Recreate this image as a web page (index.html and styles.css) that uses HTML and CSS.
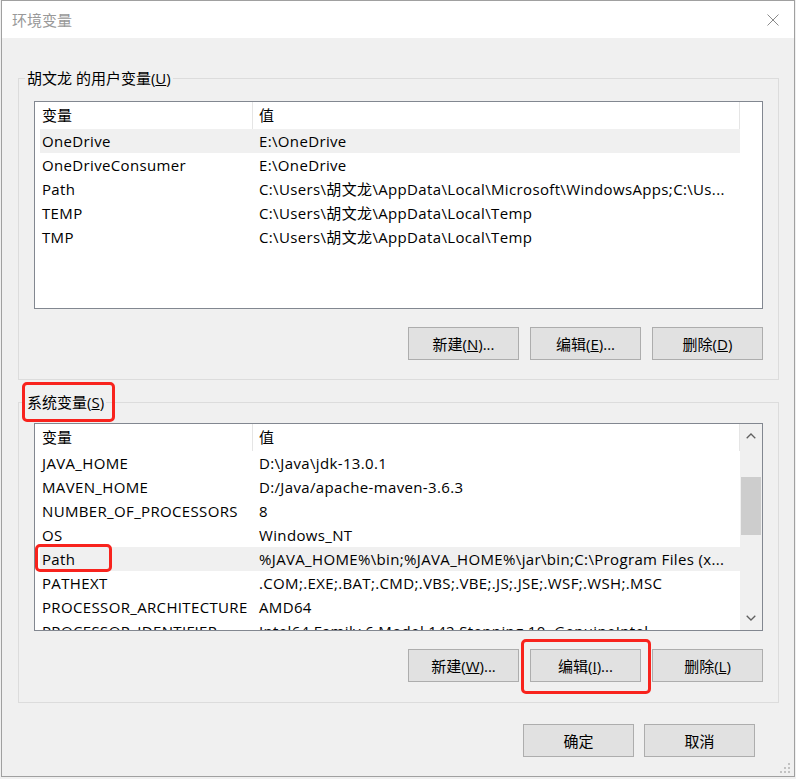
FILE: index.html
```html
<!DOCTYPE html>
<html lang="zh-CN">
<head>
<meta charset="utf-8">
<title>环境变量</title>
<link rel="stylesheet" href="styles.css">
</head>
<body>
<div class="window">
  <div class="titlebar">
    <span class="title">环境变量</span>
    <svg class="close" width="12" height="12" viewBox="0 0 12 12"><path d="M0.5 0.5 L11.5 11.5 M11.5 0.5 L0.5 11.5" stroke="#8a8a8a" stroke-width="1" fill="none"/></svg>
  </div>
  <div class="content">
    <fieldset class="group group-user">
      <legend>胡文龙 的用户变量(<u>U</u>)</legend>
      <div class="group-inner inner-user">
        <div class="list">
          <div class="list-content">
            <div class="row head"><div class="c1">变量</div><div class="c2">值</div></div>
            <div class="row sel"><div class="c1">OneDrive</div><div class="c2">E:\OneDrive</div></div>
            <div class="row"><div class="c1">OneDriveConsumer</div><div class="c2">E:\OneDrive</div></div>
            <div class="row"><div class="c1">Path</div><div class="c2">C:\Users\胡文龙\AppData\Local\Microsoft\WindowsApps;C:\Us...</div></div>
            <div class="row"><div class="c1">TEMP</div><div class="c2">C:\Users\胡文龙\AppData\Local\Temp</div></div>
            <div class="row"><div class="c1">TMP</div><div class="c2">C:\Users\胡文龙\AppData\Local\Temp</div></div>
          </div>
        </div>
        <div class="btns">
          <button class="btn">新建(<u>N</u>)...</button>
          <button class="btn">编辑(<u>E</u>)...</button>
          <button class="btn">删除(<u>D</u>)</button>
        </div>
      </div>
    </fieldset>

    <fieldset class="group group-sys">
      <legend>系统变量(<u>S</u>)</legend>
      <div class="group-inner inner-sys">
        <div class="list">
          <div class="list-content">
            <div class="row head"><div class="c1">变量</div><div class="c2">值</div></div>
            <div class="row"><div class="c1">JAVA_HOME</div><div class="c2">D:\Java\jdk-13.0.1</div></div>
            <div class="row"><div class="c1">MAVEN_HOME</div><div class="c2">D:/Java/apache-maven-3.6.3</div></div>
            <div class="row"><div class="c1">NUMBER_OF_PROCESSORS</div><div class="c2">8</div></div>
            <div class="row"><div class="c1">OS</div><div class="c2">Windows_NT</div></div>
            <div class="row sel"><div class="c1">Path</div><div class="c2">%JAVA_HOME%\bin;%JAVA_HOME%\jar\bin;C:\Program Files (x...</div></div>
            <div class="row"><div class="c1">PATHEXT</div><div class="c2">.COM;.EXE;.BAT;.CMD;.VBS;.VBE;.JS;.JSE;.WSF;.WSH;.MSC</div></div>
            <div class="row"><div class="c1">PROCESSOR_ARCHITECTURE</div><div class="c2">AMD64</div></div>
            <div class="row"><div class="c1">PROCESSOR_IDENTIFIER</div><div class="c2">Intel64 Family 6 Model 142 Stepping 10, GenuineIntel</div></div>
          </div>
          <div class="scrollbar">
            <div class="arrow"><svg width="10" height="6" viewBox="0 0 10 6"><path d="M0.7 5.3 L5 1 L9.3 5.3" stroke="#606060" stroke-width="1.3" fill="none"/></svg></div>
            <div class="track"><div class="thumb"></div></div>
            <div class="arrow"><svg width="10" height="6" viewBox="0 0 10 6"><path d="M0.7 0.7 L5 5 L9.3 0.7" stroke="#606060" stroke-width="1.3" fill="none"/></svg></div>
          </div>
        </div>
        <div class="btns">
          <button class="btn">新建(<u>W</u>)...</button>
          <button class="btn">编辑(<u>I</u>)...</button>
          <button class="btn">删除(<u>L</u>)</button>
        </div>
      </div>
    </fieldset>

    <div class="footer">
      <button class="btn">确定</button>
      <button class="btn">取消</button>
    </div>
  </div>

  <div class="mark mark-sys"></div>
  <div class="mark mark-path"></div>
  <div class="mark mark-edit"></div>

  <svg class="grip" width="12" height="12" viewBox="0 0 12 12">
    <rect x="8" y="0" width="2" height="2" fill="#c2c2c2"/>
    <rect x="4" y="4" width="2" height="2" fill="#c2c2c2"/>
    <rect x="8" y="4" width="2" height="2" fill="#c2c2c2"/>
    <rect x="0" y="8" width="2" height="2" fill="#c2c2c2"/>
    <rect x="4" y="8" width="2" height="2" fill="#c2c2c2"/>
    <rect x="8" y="8" width="2" height="2" fill="#c2c2c2"/>
  </svg>
</div>
</body>
</html>
```

FILE: styles.css
```css
html, body {
  margin: 0;
  padding: 0;
  background: #f0f0f0;
}

body {
  font-family: "Open Sans", "Noto Sans CJK SC", sans-serif;
  font-size: 15px;
  color: #000;
}

.window {
  position: relative;
  margin-left: 1px;
  width: 794px;
  height: 777px;
  box-sizing: border-box;
  border: 1px solid #a0a0a0;
  background: #f0f0f0;
  overflow: hidden;
}

.titlebar {
  height: 37px;
  background: #fff;
  display: flex;
  align-items: center;
  padding-left: 10px;
}

.title {
  color: #999;
  font-size: 15px;
  line-height: 20px;
}

.close {
  margin-left: auto;
  margin-right: 15px;
}

.content {
  padding: 30px 15px 0 16px;
}

.group {
  margin: 0;
  padding: 0;
  min-width: 0;
  border: 1px solid #dcdcdc;
}

.group legend {
  margin-left: 6px;
  padding: 0 2px;
  line-height: 20px;
  font-size: 15px;
}

.group-sys {
  margin-top: 12px;
}

.group-inner {
  padding: 13px 15px 19px 15px;
}

.inner-sys {
  padding: 11px 15px 20px 15px;
}

.list {
  height: 208px;
  box-sizing: border-box;
  border: 1px solid #828790;
  background: #fff;
  display: flex;
  overflow: hidden;
}

.list-content {
  flex: 1;
  min-width: 0;
  padding-left: 5px;
  overflow: hidden;
}

.row {
  display: flex;
  width: 700px;
  height: 24px;
  line-height: 24px;
  white-space: nowrap;
  letter-spacing: 0.35px;
}

.row.head {
  height: 27px;
  line-height: 27px;
  letter-spacing: 0;
}

.row.sel {
  background: #f0f0f0;
}

.c1 {
  width: 213px;
  flex: none;
  box-sizing: border-box;
  padding-left: 2px;
  overflow: hidden;
}

.c2 {
  width: 487px;
  flex: none;
  box-sizing: border-box;
  padding-left: 6px;
  overflow: hidden;
}

.head .c1,
.head .c2 {
  border-right: 1px solid #e5e5e5;
}

.scrollbar {
  width: 22px;
  flex: none;
  background: #f0f0f0;
  display: flex;
  flex-direction: column;
}

.arrow {
  height: 24px;
  display: flex;
  align-items: center;
  justify-content: center;
}

.track {
  flex: 1;
}

.thumb {
  margin: 29px 1px 0 1px;
  height: 58px;
  background: #cdcdcd;
}

.btns {
  display: flex;
  justify-content: flex-end;
  gap: 11px;
  margin-top: 18px;
}

.btn {
  width: 111px;
  height: 33px;
  box-sizing: border-box;
  border: 1px solid #adadad;
  background: #e1e1e1;
  font-family: "Open Sans", "Noto Sans CJK SC", sans-serif;
  font-size: 15px;
  color: #000;
  padding: 0;
  margin: 0;
  display: flex;
  align-items: center;
  justify-content: center;
  line-height: 20px;
}

.footer {
  display: flex;
  justify-content: flex-end;
  gap: 10px;
  margin-top: 21px;
  padding-right: 24px;
}

.mark {
  position: absolute;
  box-sizing: border-box;
  border: 3px solid #f8231d;
  border-radius: 5px;
}

.mark-sys {
  left: 20px;
  top: 381px;
  width: 93px;
  height: 40px;
}

.mark-path {
  left: 33px;
  top: 543px;
  width: 77px;
  height: 28px;
}

.mark-edit {
  left: 519px;
  top: 638px;
  width: 130px;
  height: 55px;
}

.grip {
  position: absolute;
  left: 778px;
  top: 762px;
}
```
